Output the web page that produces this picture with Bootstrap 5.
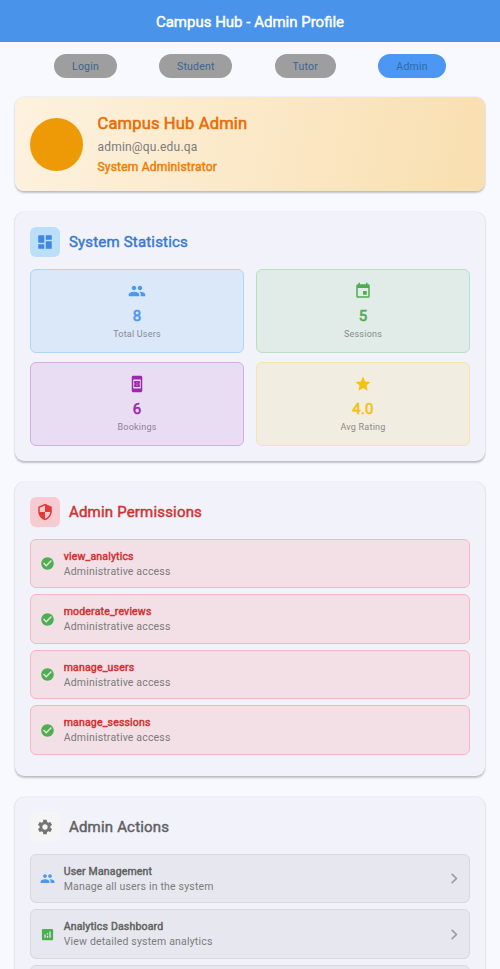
<!DOCTYPE html>
<html lang="en">
<head>
<meta charset="utf-8">
<meta name="viewport" content="width=device-width, initial-scale=1">
<title>Campus Hub - Admin Profile</title>
<link href="https://cdn.jsdelivr.net/npm/bootstrap@5.3.0/dist/css/bootstrap.min.css" rel="stylesheet">
<style>
body{font-family:Roboto,"Liberation Sans",sans-serif;background:#f8f9ff;color:#7b7b7b;height:100vh;overflow:hidden;line-height:1.2}
.strong-text{-webkit-text-stroke:.45px currentColor}
.topbar{height:42px;background:#4a93ea;color:#fff;font-size:15px;padding-top:2px}
.tabs-row{padding-top:12px;gap:42.5px;height:55px}
.chip{height:24px;border-radius:13px;background:#9e9e9e;color:#3b658f;font-size:10.5px;letter-spacing:.2px;padding-top:2px}
.chip.on{background:#4b97f3;color:#306ba7}
.w-login{width:62.5px}.w-student{width:73px}.w-tutor{width:61px}.w-admin{width:67.5px}
.surface{margin:0 15px 21px;border-radius:9px;background:#f1f2fa;padding:15px;box-shadow:0 1.5px 2px rgba(0,0,0,.22),0 0 1.5px rgba(0,0,0,.12)}
.profile{height:94px;margin-bottom:20.5px;border-radius:9px;background:linear-gradient(101.3deg,#fdf2df,#f9dfb0)}
.avatar-dot{width:53px;height:53px;background:#ee9a06;margin-right:14.5px}
.p-name{font-size:16.5px;line-height:20px;color:#ea6c05;letter-spacing:.17px;-webkit-text-stroke-width:.55px}
.p-mail{font-size:12px;line-height:16px;letter-spacing:.2px;margin-top:5px}
.p-role{font-size:12px;line-height:16px;color:#ef7d05;margin-top:4px;letter-spacing:.2px}
.sec-head{height:30px;margin-bottom:12px;gap:9px}
.sec-icon{width:30px;height:30px;border-radius:6px}
.sec-icon svg{width:18px;height:18px}
.sec-title{font-size:15px;letter-spacing:.18px}
.tiles{display:grid;grid-template-columns:1fr 1fr;column-gap:12px;row-gap:9px}
.tile{height:84px;border-radius:6px;border:1px solid;padding-top:12px}
.tile svg{width:18px;height:18px}
.tile-num{font-size:15px;line-height:18px;margin-top:7px;-webkit-text-stroke-width:.6px;letter-spacing:.15px}
.tile-cap{font-size:9px;line-height:12px;letter-spacing:.22px;margin-top:3px}
.t-blue{background:#dbe8fa;border-color:#aed4f8;color:#4b97f3}
.t-green{background:#e1ebe8;border-color:#bbdfc2;color:#4caf50}
.t-purple{background:#e9ddf3;border-color:#d6ade2;color:#9c27b0}
.t-amber{background:#f2ede1;border-color:#f8e3ae;color:#f6c010}
.entry{height:49.5px;border-radius:6px;border:1px solid;margin-bottom:6px;padding:1px 7px 0 9px}
.entry>svg{width:15px;height:15px;flex:none}
.entry-text{margin-left:8.7px}
.e-name{font-size:10.5px;line-height:15px;letter-spacing:.18px}
.e-sub{font-size:10.5px;line-height:15px;letter-spacing:.18px}
.e-red{background:#f2e0e6;border-color:#f4b9bf}
.e-red .e-name{color:#d32f2f}
.e-grey{background:#e7e8ef;border-color:#d8d9de}
.e-grey .e-name{color:#616161}
</style>
<script src="https://cdn.jsdelivr.net/npm/bootstrap@5.3.0/dist/js/bootstrap.bundle.min.js"></script>
</head>
<body>
<svg class="d-none">
<symbol id="people" viewBox="0 0 24 24"><path fill="currentColor" d="M16 11c1.66 0 2.99-1.34 2.99-3S17.66 5 16 5s-3 1.34-3 3 1.34 3 3 3zm-8 0c1.66 0 2.99-1.34 2.99-3S9.66 5 8 5 5 6.34 5 8s1.34 3 3 3zm0 2c-2.33 0-7 1.17-7 3.5V19h14v-2.500c0-2.330-4.670-3.500-7-3.500zm8 0c-.29 0-.62.02-.97.05 1.160.84 1.970 1.970 1.970 3.450V19h6v-2.500c0-2.330-4.670-3.500-7-3.500z"/></symbol>
<symbol id="check" viewBox="0 0 24 24"><path fill="#4caf50" d="M12 2C6.480 2 2 6.480 2 12s4.480 10 10 10 10-4.480 10-10S17.520 2 12 2zm-2 15l-5-5 1.410-1.410L10 14.170l7.590-7.590L19 8l-9 9z"/></symbol>
<symbol id="chev" viewBox="0 0 24 24"><path fill="none" stroke="#9e9e9e" stroke-width="2.700" d="M7.500 4.500 15 12 7.500 19.500"/></symbol>
</svg>
<header class="topbar d-flex align-items-center justify-content-center strong-text"><span>Campus Hub - Admin Profile</span></header>
<nav class="tabs-row d-flex justify-content-center align-items-start">
<div class="chip w-login d-flex align-items-center justify-content-center">Login</div>
<div class="chip w-student d-flex align-items-center justify-content-center">Student</div>
<div class="chip w-tutor d-flex align-items-center justify-content-center">Tutor</div>
<div class="chip on w-admin d-flex align-items-center justify-content-center">Admin</div>
</nav>
<main>
<section class="surface profile d-flex align-items-center">
<div class="avatar-dot rounded-circle flex-shrink-0"></div>
<div><div class="p-name strong-text"><span>Campus Hub Admin</span></div><div class="p-mail"><span>admin@qu.edu.qa</span></div><div class="p-role strong-text"><span>System Administrator</span></div></div>
</section>

<section class="surface">
<div class="sec-head d-flex align-items-center">
<div class="sec-icon d-flex align-items-center justify-content-center" style="background:#bbdefb"><svg viewBox="0 0 24 24"><path fill="#3f87e6" d="M3 13h8V3H3v10zm0 8h8v-6H3v6zm10 0h8V11h-8v10zm0-18v6h8V3h-8z"/></svg></div>
<div class="sec-title strong-text" style="color:#3878d2">System Statistics</div></div>
<div class="tiles">
<div class="tile t-blue d-flex flex-column align-items-center"><svg><use href="#people"/></svg><div class="tile-num strong-text">8</div><div class="tile-cap" style="color:#858b94">Total Users</div></div>
<div class="tile t-green d-flex flex-column align-items-center"><svg viewBox="0 0 24 24"><path fill="currentColor" d="M17 12h-5v5h5v-5zM16 1v2H8V1H6v2H5c-1.110 0-1.990.9-1.990 2L3 19c0 1.100.89 2 2 2h14c1.100 0 2-.9 2-2V5c0-1.100-.9-2-2-2h-1V1h-2zm3 18H5V8h14v11z"/></svg><div class="tile-num strong-text">5</div><div class="tile-cap" style="color:#858b8a">Sessions</div></div>
<div class="tile t-purple d-flex flex-column align-items-center"><svg viewBox="0 0 24 24"><path fill="currentColor" d="M17 1H7c-1.100 0-2 .9-2 2v18c0 1.100.9 2 2 2h10c1.100 0 2-.9 2-2V3c0-1.100-.9-2-2-2zm0 17H7V6h10v12zM16 11V9.140c0-.63-.45-1.140-1-1.140H9c-.55 0-1 .51-1 1.140V11c.55 0 1 .45 1 1s-.45 1-1 1v1.860c0 .63.45 1.140 1 1.140h6c.55 0 1-.51 1-1.140V13c-.55 0-1-.45-1-1s.45-1 1-1zm-3.500 3.500h-1v-1h1v1zm0-2h-1v-1h1v1zm0-2h-1v-1h1v1z"/></svg><div class="tile-num strong-text">6</div><div class="tile-cap" style="color:#89858f">Bookings</div></div>
<div class="tile t-amber d-flex flex-column align-items-center"><svg viewBox="0 0 24 24"><path fill="currentColor" d="M12 17.270L18.180 21l-1.640-7.030L22 9.240l-7.190-.61L12 2 9.190 8.630 2 9.240l5.460 4.730L5.820 21z"/></svg><div class="tile-num strong-text">4.0</div><div class="tile-cap" style="color:#8b8a86">Avg Rating</div></div>
</div>
</section>

<section class="surface">
<div class="sec-head d-flex align-items-center">
<div class="sec-icon d-flex align-items-center justify-content-center" style="background:#f7cbd1"><svg viewBox="0 0 24 24"><path fill="#e53935" d="M12 1L3 5v6c0 5.550 3.840 10.740 9 12 5.160-1.260 9-6.450 9-12V5l-9-4zm0 10.990h7c-.53 4.120-3.280 7.790-7 8.940V12H5V6.300l7-3.110v8.800z"/></svg></div>
<div class="sec-title strong-text" style="color:#d32f2f">Admin Permissions</div></div>
<div class="entry e-red d-flex align-items-center"><svg><use href="#check"/></svg><div class="entry-text"><div class="e-name strong-text">view_analytics</div><div class="e-sub">Administrative access</div></div></div>
<div class="entry e-red d-flex align-items-center"><svg><use href="#check"/></svg><div class="entry-text"><div class="e-name strong-text">moderate_reviews</div><div class="e-sub">Administrative access</div></div></div>
<div class="entry e-red d-flex align-items-center"><svg><use href="#check"/></svg><div class="entry-text"><div class="e-name strong-text">manage_users</div><div class="e-sub">Administrative access</div></div></div>
<div class="entry e-red d-flex align-items-center"><svg><use href="#check"/></svg><div class="entry-text"><div class="e-name strong-text">manage_sessions</div><div class="e-sub">Administrative access</div></div></div>
</section>

<section class="surface">
<div class="sec-head d-flex align-items-center">
<div class="sec-icon d-flex align-items-center justify-content-center" style="background:#f5f5f5"><svg viewBox="0 0 24 24"><path fill="#757575" d="M19.140 12.940c.04-.3.06-.61.06-.94 0-.32-.02-.64-.07-.94l2.030-1.580c.18-.14.23-.41.12-.61l-1.920-3.320c-.12-.22-.37-.29-.59-.22l-2.390.96c-.5-.38-1.030-.7-1.620-.94l-.36-2.540c-.04-.24-.24-.41-.48-.41h-3.840c-.24 0-.43.17-.47.41l-.36 2.540c-.59.24-1.130.57-1.620.94l-2.390-.96c-.22-.08-.47 0-.59.22L2.740 8.870c-.12.21-.08.47.12.61l2.030 1.580c-.05.3-.09.63-.09.94s.02.64.07.94l-2.030 1.580c-.18.14-.23.41-.12.61l1.920 3.320c.12.22.37.29.59.22l2.390-.96c.5.38 1.030.7 1.620.94l.36 2.540c.05.24.24.41.48.41h3.840c.24 0 .44-.17.47-.41l.36-2.540c.59-.24 1.130-.56 1.620-.94l2.390.96c.22.08.47 0 .59-.22l1.920-3.320c.12-.22.07-.47-.12-.61l-2.010-1.580zM12 15.600c-1.980 0-3.600-1.620-3.600-3.600s1.620-3.600 3.600-3.600 3.600 1.620 3.600 3.600-1.620 3.600-3.600 3.600z"/></svg></div>
<div class="sec-title strong-text" style="color:#616161">Admin Actions</div></div>
<div class="entry e-grey d-flex align-items-center"><svg style="color:#4b97f3"><use href="#people"/></svg><div class="entry-text flex-grow-1"><div class="e-name strong-text">User Management</div><div class="e-sub">Manage all users in the system</div></div><svg><use href="#chev"/></svg></div>
<div class="entry e-grey d-flex align-items-center"><svg viewBox="0 0 24 24"><path fill="#4caf50" d="M19 3H5c-1.100 0-2 .9-2 2v14c0 1.100.9 2 2 2h14c1.100 0 2-.9 2-2V5c0-1.100-.9-2-2-2zM9 17H7v-5h2v5zm4 0h-2v-3h2v3zm0-5h-2v-2h2v2zm4 5h-2V7h2v10z"/></svg><div class="entry-text flex-grow-1"><div class="e-name strong-text">Analytics Dashboard</div><div class="e-sub">View detailed system analytics</div></div><svg><use href="#chev"/></svg></div>
<div class="entry e-grey"></div>
</section>
</main>
</body>
</html>
